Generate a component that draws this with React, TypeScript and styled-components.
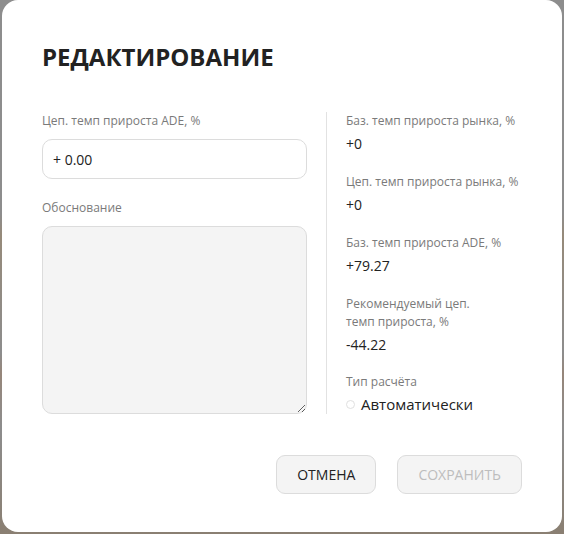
import React from "react";
import styled, { createGlobalStyle } from "styled-components";

const GlobalStyle = createGlobalStyle`
  html, body {
    margin: 0;
    padding: 0;
  }
  body {
    font-family: "Open Sans", "Liberation Sans", sans-serif;
    background: linear-gradient(
      180deg,
      #8d8d8d 0%,
      #8d8d8d 40%,
      #968a7a 44%,
      #8d8d8d 66%,
      #96867a 70%,
      #8d8d8d 80%,
      #8a7f72 100%
    );
    min-height: 534px;
  }
`;

const Backdrop = styled.div`
  height: 534px;
  display: flex;
  justify-content: center;
  align-items: flex-start;
`;

const Modal = styled.div`
  width: 560px;
  height: 532px;
  box-sizing: border-box;
  background: #fff;
  border-radius: 16px;
  padding: 40px 40px 0 40px;
  display: flex;
  flex-direction: column;
`;

const Title = styled.h2`
  margin: 0;
  font-size: 24px;
  font-weight: 700;
  color: #222;
  line-height: 34px;
`;

const Body = styled.div`
  margin-top: 38px;
  display: flex;
  align-items: stretch;
`;

const LeftColumn = styled.div`
  width: 265px;
  display: flex;
  flex-direction: column;
`;

const Divider = styled.div`
  width: 1px;
  background: #e2e2e2;
  margin: 0 19px 0 19px;
`;

const RightColumn = styled.div`
  width: 176px;
  display: flex;
  flex-direction: column;
`;

const Label = styled.div<{ $gap?: number; $narrow?: boolean }>`
  font-size: 12px;
  line-height: 18px;
  color: #7a7a7a;
  margin-top: ${(p) => p.$gap ?? 0}px;
  max-width: ${(p) => (p.$narrow ? "150px" : "none")};
`;

const Input = styled.input`
  margin-top: 9px;
  height: 40px;
  box-sizing: border-box;
  border: 1px solid #dcdcdc;
  border-radius: 10px;
  padding: 0 10px;
  font-family: inherit;
  font-size: 14px;
  color: #222;
  background: #fff;
  outline: none;
`;

const TextArea = styled.textarea`
  margin-top: 9px;
  height: 188px;
  box-sizing: border-box;
  border: 1px solid #dcdcdc;
  border-radius: 10px;
  background: #f4f4f4;
  font-family: inherit;
  font-size: 14px;
  resize: vertical;
  outline: none;
`;

const Value = styled.div`
  margin-top: 4px;
  font-size: 14px;
  line-height: 20px;
  color: #222;
`;

const RadioRow = styled.label`
  margin-top: 3px;
  display: flex;
  align-items: center;
  gap: 6px;
  font-size: 15px;
  line-height: 20px;
  color: #222;
`;

const RadioDot = styled.span`
  width: 9px;
  height: 9px;
  border-radius: 50%;
  border: 1px solid #e0e0e0;
  box-sizing: border-box;
`;

const Footer = styled.div`
  margin-top: 41px;
  display: flex;
  justify-content: flex-end;
  gap: 21px;
`;

const Button = styled.button<{ $disabled?: boolean }>`
  height: 39px;
  padding: 0 20px;
  border: 1px solid #dcdcdc;
  border-radius: 9px;
  background: #f4f4f4;
  font-family: inherit;
  font-size: 14px;
  font-weight: 400;
  color: ${(p) => (p.$disabled ? "#bdbdbd" : "#222")};
  text-transform: uppercase;
  cursor: ${(p) => (p.$disabled ? "default" : "pointer")};
`;

const stats = [
  { label: "Баз. темп прироста рынка, %", value: "+0" },
  { label: "Цеп. темп прироста рынка, %", value: "+0" },
  { label: "Баз. темп прироста ADE, %", value: "+79.27" },
  { label: "Рекомендуемый цеп. темп прироста, %", value: "-44.22", narrow: true },
];

export default function App() {
  return (
    <>
      <GlobalStyle />
      <Backdrop>
        <Modal>
          <Title>РЕДАКТИРОВАНИЕ</Title>
          <Body>
            <LeftColumn>
              <Label>Цеп. темп прироста ADE, %</Label>
              <Input defaultValue="+ 0.00" />
              <Label $gap={20}>Обоснование</Label>
              <TextArea />
            </LeftColumn>
            <Divider />
            <RightColumn>
              {stats.map((s, i) => (
                <React.Fragment key={s.label}>
                  <Label $gap={i === 0 ? 0 : 19} $narrow={s.narrow}>
                    {s.label}
                  </Label>
                  <Value>{s.value}</Value>
                </React.Fragment>
              ))}
              <Label $gap={18}>Тип расчёта</Label>
              <RadioRow>
                <RadioDot />
                Автоматически
              </RadioRow>
            </RightColumn>
          </Body>
          <Footer>
            <Button>Отмена</Button>
            <Button $disabled>Сохранить</Button>
          </Footer>
        </Modal>
      </Backdrop>
    </>
  );
}
